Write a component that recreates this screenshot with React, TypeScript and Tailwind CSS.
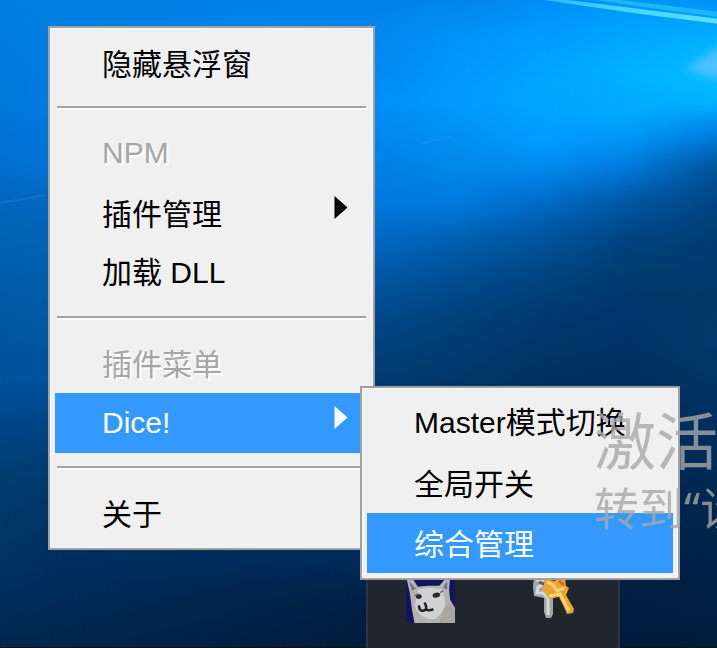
import { useId } from 'react';
import clsx from 'clsx';

type Stop = [y: number, color: string];

const WALLPAPER: { x: number; stops: Stop[] }[] = [
  {
    x: 0,
    stops: [[0, '#007fe0'], [100, '#0078da'], [150, '#0072d4'], [200, '#0067bf'], [250, '#0061b0'], [300, '#0059a6'], [380, '#00529a'], [430, '#004484'], [480, '#003d70'], [540, '#003668'], [600, '#002f5c'], [648, '#00264c']],
  },
  {
    x: 48,
    stops: [[0, '#007fe2'], [100, '#007ade'], [170, '#0070d2'], [200, '#0068c0'], [250, '#0062b2'], [300, '#005ba8'], [380, '#00529a'], [430, '#004282'], [480, '#003a6c'], [560, '#003060'], [600, '#002c58'], [648, '#00264c']],
  },
  {
    x: 375,
    stops: [[0, '#0083ea'], [60, '#0089f0'], [100, '#008ff5'], [150, '#0084ea'], [200, '#0079de'], [240, '#0068c4'], [290, '#00529a'], [340, '#004280'], [385, '#003a6c'], [560, '#002a58'], [600, '#002044'], [648, '#001b3a']],
  },
  {
    x: 460,
    stops: [[0, '#0084ea'], [40, '#0094f8'], [100, '#009bff'], [140, '#0090f0'], [180, '#0083e6'], [210, '#0076d8'], [240, '#005fae'], [280, '#004c90'], [320, '#004078'], [385, '#003768'], [600, '#001e40'], [648, '#001b3a']],
  },
  {
    x: 545,
    stops: [[0, '#008ef5'], [40, '#009dff'], [80, '#00a6ff'], [110, '#00a4ff'], [140, '#009cff'], [165, '#008cf0'], [195, '#0070d0'], [230, '#0058a4'], [270, '#004684'], [310, '#003a70'], [385, '#003060'], [600, '#001e40'], [648, '#001b3a']],
  },
  {
    x: 630,
    stops: [[0, '#0096fc'], [30, '#00a4ff'], [75, '#00b2ff'], [115, '#00a8ff'], [140, '#0094f6'], [168, '#0078da'], [200, '#0058a4'], [240, '#004280'], [280, '#003a6c'], [320, '#00346a'], [385, '#002f60'], [520, '#002248'], [648, '#001b3c']],
  },
  {
    x: 717,
    stops: [[0, '#0090fa'], [20, '#00a4ff'], [50, '#00b6ff'], [80, '#00bcff'], [105, '#00b0ff'], [122, '#0090f0'], [142, '#0074d0'], [165, '#00569c'], [190, '#00488a'], [230, '#003e74'], [300, '#003868'], [340, '#003a6c'], [385, '#003464'], [450, '#002c5c'], [520, '#00264c'], [648, '#001c3c']],
  },
];

function Wallpaper() {
  const id = useId();
  return (
    <svg className="absolute inset-0 h-full w-full" viewBox="0 0 717 648" preserveAspectRatio="none" aria-hidden="true">
      <defs>
        {WALLPAPER.map((column, i) => (
          <linearGradient key={column.x} id={`${id}c${i}`} x1="0" y1="0" x2="0" y2="648" gradientUnits="userSpaceOnUse">
            {column.stops.map(([y, color]) => (
              <stop key={y} offset={y / 648} stopColor={color} />
            ))}
          </linearGradient>
        ))}
        {WALLPAPER.slice(1).map((column, i) => (
          <linearGradient key={column.x} id={`${id}r${i + 1}`} x1={WALLPAPER[i].x} y1="0" x2={column.x} y2="0" gradientUnits="userSpaceOnUse" colorInterpolation="sRGB">
            <stop offset="0" stopColor="#fff" stopOpacity="0" />
            <stop offset="1" stopColor="#fff" />
          </linearGradient>
        ))}
        {WALLPAPER.slice(1).map((column, i) => (
          <mask key={column.x} id={`${id}m${i + 1}`} maskUnits="userSpaceOnUse" x="0" y="0" width="717" height="648">
            <rect width="717" height="648" fill={`url(#${id}r${i + 1})`} />
          </mask>
        ))}
        <linearGradient id={`${id}beam`} x1="530" y1="0" x2="717" y2="0" gradientUnits="userSpaceOnUse">
          <stop offset="0" stopColor="#35c0ff" stopOpacity="0.7" />
          <stop offset="0.4" stopColor="#3fd2ff" />
          <stop offset="1" stopColor="#58e2ff" />
        </linearGradient>
        <filter id={`${id}soft`} x="-50%" y="-50%" width="200%" height="200%">
          <feGaussianBlur stdDeviation="5" />
        </filter>
        <filter id={`${id}edge`}>
          <feGaussianBlur stdDeviation="0.6" />
        </filter>
      </defs>
      {WALLPAPER.map((column, i) => (
        <rect key={column.x} width="717" height="648" fill={`url(#${id}c${i})`} mask={i ? `url(#${id}m${i})` : undefined} />
      ))}
      <path d="M684 70 L724 44 V80 Z" fill="#5cc4ff" opacity="0.85" filter={`url(#${id}soft)`} />
      <g filter={`url(#${id}edge)`}>
        <path d="M530 -2 H552 L640 9 L720 19 V24 L640 14 Z" fill={`url(#${id}beam)`} />
        <path d="M590 -1 H612 L720 12 V17 L650 8 Z" fill="#24baff" opacity="0.85" />
        <path d="M0 203 L46 195" stroke="#2a86d4" strokeWidth="2" opacity="0.4" />
        <path d="M420 144 L450 136" stroke="#1f9cff" strokeWidth="3" opacity="0.2" />
      </g>
      <rect y="647" width="717" height="1" fill="#101418" />
    </svg>
  );
}

type Entry =
  | { kind: 'separator' }
  | { kind: 'item'; label: string; disabled?: boolean; active?: boolean; submenu?: boolean };

const MAIN_MENU: Entry[] = [
  { kind: 'item', label: '隐藏悬浮窗' },
  { kind: 'separator' },
  { kind: 'item', label: 'NPM', disabled: true },
  { kind: 'item', label: '插件管理', submenu: true },
  { kind: 'item', label: '加载 DLL' },
  { kind: 'separator' },
  { kind: 'item', label: '插件菜单', disabled: true },
  { kind: 'item', label: 'Dice!', active: true, submenu: true },
  { kind: 'separator' },
  { kind: 'item', label: '关于' },
];

const DICE_MENU: Entry[] = [
  { kind: 'item', label: 'Master模式切换' },
  { kind: 'item', label: '全局开关' },
  { kind: 'item', label: '综合管理', active: true },
];

function Menu({ label, entries, className }: { label: string; entries: Entry[]; className: string }) {
  return (
    <div
      role="menu"
      aria-label={label}
      className={clsx('absolute flex flex-col border-2 border-[#a0a0a0] bg-[#f0f0f0] p-[5px] shadow-[inset_0_0_0_1px_#f8f8f8]', className)}
    >
      {entries.map((entry, i) =>
        entry.kind === 'separator' ? (
          <div key={i} role="separator" className="mx-[2px] h-[30px] pt-[13px]">
            <div className="h-[4px] border-t-2 border-[#a5a5a5] bg-[#fcfcfc]" />
          </div>
        ) : (
          <button
            key={i}
            type="button"
            role="menuitem"
            disabled={entry.disabled}
            aria-haspopup={entry.submenu ? 'menu' : undefined}
            className={clsx(
              'flex h-[60px] items-start justify-between pr-5 pl-[47px] text-left text-[30px] whitespace-nowrap',
              /[A-Za-z]/.test(entry.label)
                ? "font-['Liberation_Sans','Noto_Sans_CJK_SC',sans-serif] leading-[60px]"
                : "font-['Noto_Sans_CJK_SC',sans-serif] leading-[58px]",
              entry.disabled && 'text-[#a6a6a6] [text-shadow:2px_2px_0_#fff]',
              entry.active && 'bg-[#3399ff] text-white',
              !entry.disabled && !entry.active && 'text-black',
            )}
          >
            <span>{entry.label}</span>
            {entry.submenu && (
              <svg className="mt-[13px] h-[23px] w-[14px]" viewBox="0 0 14 23" aria-hidden="true">
                <path d="M0.5 0 L13.5 11.5 L0.5 23 Z" fill="currentColor" />
              </svg>
            )}
          </button>
        ),
      )}
    </div>
  );
}

function CatIcon() {
  const id = useId();
  return (
    <svg className="h-[45px] w-[49px]" viewBox="0 0 50 46" aria-hidden="true">
      <defs>
        <filter id={id} x="0" y="0" width="100%" height="100%">
          <feGaussianBlur stdDeviation="0.8" />
        </filter>
      </defs>
      <rect width="50" height="46" fill="#14145e" />
      <g filter={`url(#${id})`}>
        <path d="M0 -2 H5 L12 9 L22 8 L34 8 L40 1 L45 0 L44 12 L45 22 L52 34 V48 H9 L6 32 L4 16 Z" fill="#b4b3b4" />
        <path d="M12 12 Q24 8 37 12 L40 24 Q40 36 29 42 Q13 42 9 28 Z" fill="#d2d1d2" />
        <path d="M3 3 L10 11 L6 13 Z M42 3 L38 10 L42 12 Z" fill="#77737f" />
        <path d="M38 32 L45 24 L50 34 V46 H34 Z" fill="#a9a7a0" />
        <ellipse cx="13" cy="19" rx="3" ry="2.4" fill="#26272b" />
        <ellipse cx="31" cy="17.500" rx="4" ry="2.6" fill="#2b2c30" transform="rotate(-12 31 17.500)" />
        <path d="M9 18 l4 -2 M35 15 l3 -2" stroke="#66666c" strokeWidth="1.5" />
        <path d="M19 25 L20.500 29 V32 M13 28 L14 32 Q17 35 20 32 Q23 34 28 32" fill="none" stroke="#222226" strokeWidth="2.6" />
      </g>
    </svg>
  );
}

function KeysIcon() {
  const id = useId();
  return (
    <svg className="h-[46px] w-[46px]" viewBox="0 0 46 46" aria-hidden="true">
      <defs>
        <filter id={id} x="-10%" y="-10%" width="120%" height="120%">
          <feGaussianBlur stdDeviation="0.7" />
        </filter>
      </defs>
      <g filter={`url(#${id})`}>
        <path d="M3 0 H17 L22 10 V36 L20 40 L15 40 L13 34 V20 L3 18 L2 8 Z" fill="#a3a5a8" />
        <path d="M5 2 H12 L10 8 L7 9 L6 15 H12 L17 20 V37" fill="none" stroke="#d7d8da" strokeWidth="3" />
        <path d="M8 4 L13 6" stroke="#5b6269" strokeWidth="3" />
        <path d="M14 1 L24 3 L27 0 H34 L35 8 L38 10 L35 17 L43 31 L42 35 L36 36 L33 29 L28 19 L18 21 L12 12 Z" fill="#efa22e" />
        <path d="M16 4 L22 7 L26 13 L33 10 M18 18 L29 16 L38 33" fill="none" stroke="#ffd477" strokeWidth="3" />
        <path d="M28 3 L33 7" stroke="#ca721d" strokeWidth="3" />
      </g>
    </svg>
  );
}

export default function App() {
  return (
    <main className="relative min-h-screen overflow-hidden bg-[#00264c]">
      <Wallpaper />

      <div className="absolute top-[560px] bottom-0 left-[366px] flex w-[254px] items-start gap-[76px] border-x-2 border-[#2a3643] bg-[#20262e] pt-[18px] pl-[38px]">
        <button type="button" aria-label="Cat">
          <CatIcon />
        </button>
        <button type="button" aria-label="Keys">
          <KeysIcon />
        </button>
      </div>

      <Menu label="CQ" entries={MAIN_MENU} className="top-[26px] left-[48px] w-[327px]" />
      <Menu label="Dice!" entries={DICE_MENU} className="top-[386px] left-[360px] w-[320px]" />

      <div className="pointer-events-none absolute top-[407px] left-[594px] flex flex-col font-['Noto_Sans','Noto_Sans_CJK_SC',sans-serif] whitespace-nowrap text-[#a8a8a8]/80">
        <p className="text-[62px] leading-[68px]">激活</p>
        <p className="text-[45px] leading-[68px]">转到“设</p>
      </div>
    </main>
  );
}
